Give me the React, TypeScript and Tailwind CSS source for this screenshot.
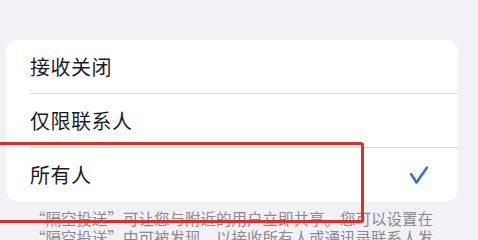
import React from 'react';

const options = ['接收关闭', '仅限联系人', '所有人'];

export default function App() {
  const selected = 2;

  return (
    <div
      lang="zh-CN"
      className="relative w-[478px] h-[240px] overflow-hidden bg-[#f2f1f6]"
      style={{ fontFamily: '"Noto Sans CJK SC", "Noto Sans", sans-serif' }}
    >
      <div className="pt-[40px] pl-[6px] pr-[20px]">
        <div className="bg-white rounded-[12px] overflow-hidden">
          {options.map((label, i) => (
            <div key={label} className="pl-[24px]">
              <div
                className={`h-[54px] flex items-center justify-between pr-[30px] ${
                  i < options.length - 1 ? 'border-b border-[#dcdcde]' : ''
                }`}
              >
                <span className="text-[20px] leading-none text-[#1c1c1e] tracking-[0.5px]">{label}</span>
                {i === selected && (
                  <svg width="18" height="18" viewBox="0 0 18 18" fill="none">
                    <polyline
                      points="1,8 6.5,16.5 17,1.5"
                      stroke="#3d6fd2"
                      strokeWidth="2.6"
                      strokeLinecap="round"
                      strokeLinejoin="round"
                    />
                  </svg>
                )}
              </div>
            </div>
          ))}
        </div>
      </div>

      <div className="mt-[7px] pl-[30px] pr-[20px] text-[15.5px] leading-[19px] text-[#8a8a8e] whitespace-nowrap">
        <p>“隔空投送”可让您与附近的用户立即共享。您可以设置在</p>
        <p>“隔空投送”中可被发现，以接收所有人或通讯录联系人发</p>
      </div>

      {/* red highlight box */}
      <div className="absolute left-[-6px] top-[142px] w-[370px] h-[81px] border-[3px] border-[#d8302a] rounded-[3px]" />
    </div>
  );
}
